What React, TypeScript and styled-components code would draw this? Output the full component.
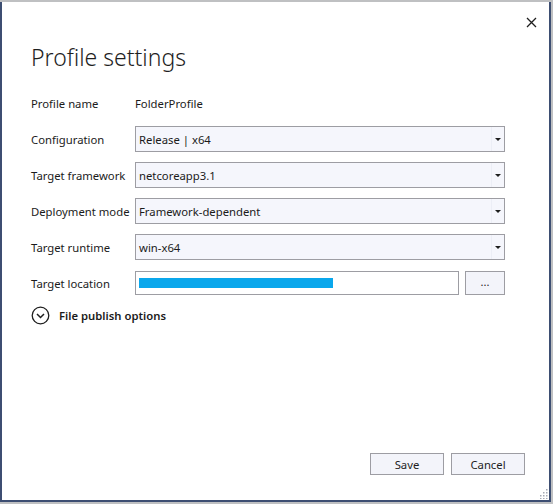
import React from 'react';
import styled, { createGlobalStyle } from 'styled-components';

const GlobalStyle = createGlobalStyle`
  html, body {
    margin: 0;
    padding: 0;
    background: #bfc0c2;
  }
  body {
    font-family: 'Noto Sans', 'Open Sans', sans-serif;
    font-size: 11.3px;
    color: #1b1b1b;
  }
`;

const Screen = styled.div`
  width: 553px;
  height: 504px;
  padding-top: 2px;
  box-sizing: border-box;
`;

const Window = styled.div`
  position: relative;
  width: 551px;
  height: 500px;
  box-sizing: border-box;
  background: #ffffff;
  border-left: 2px solid #3d4e72;
  border-right: 2px solid #3d4e72;
  border-bottom: 2px solid #3d4e72;
  display: flex;
  flex-direction: column;
  padding: 0 44px 25px 29px;
`;

const TopBar = styled.div`
  display: flex;
  justify-content: flex-end;
  height: 39px;
  margin-right: -35px;
  padding-top: 11px;
  box-sizing: border-box;
`;

const CloseButton = styled.button`
  width: 18px;
  height: 18px;
  border: none;
  background: transparent;
  padding: 0;
  display: flex;
  align-items: center;
  justify-content: center;
  cursor: pointer;
`;

const Title = styled.h1`
  margin: 0;
  font-family: 'Noto Sans', 'Open Sans', sans-serif;
  font-weight: 300;
  font-size: 23px;
  line-height: 32px;
  color: #1e1e1e;
`;

const Form = styled.div`
  margin-top: 17px;
  display: grid;
  grid-template-columns: 104px 1fr;
  grid-auto-rows: 26px;
  row-gap: 10px;
  align-items: center;
`;

const Label = styled.div`
  white-space: nowrap;
`;

const Value = styled.div``;

const Select = styled.div`
  height: 26px;
  box-sizing: border-box;
  border: 1px solid #9d9da3;
  background: #f5f6fc;
  display: flex;
  align-items: center;
`;

const SelectText = styled.span`
  flex: 1;
  padding-left: 3px;
  white-space: nowrap;
`;

const SelectArrow = styled.span`
  width: 12px;
  height: 100%;
  border-left: 1px solid #eceef6;
  display: flex;
  align-items: center;
  justify-content: center;
  &::after {
    content: '';
    border-left: 3px solid transparent;
    border-right: 3px solid transparent;
    border-top: 3px solid #1e1e1e;
  }
`;

const LocationRow = styled.div`
  display: flex;
  gap: 6px;
  height: 24px;
`;

const PathInput = styled.div`
  flex: 1;
  box-sizing: border-box;
  border: 1px solid #9d9da3;
  background: #ffffff;
  padding: 6px 0 0 3px;
`;

const Redaction = styled.div`
  width: 194px;
  height: 10px;
  background: #0aa7ec;
`;

const Browse = styled.button`
  width: 40px;
  height: 24px;
  box-sizing: border-box;
  border: 1px solid #9d9da3;
  background: #f3f4fa;
  font-family: inherit;
  font-size: 11px;
  color: #1e1e1e;
  padding: 0 0 4px;
`;

const Expander = styled.div`
  margin-top: 9px;
  display: flex;
  align-items: center;
  gap: 9px;
  font-weight: 600;
  height: 20px;
`;

const Spacer = styled.div`
  flex: 1;
`;

const Footer = styled.div`
  display: flex;
  justify-content: flex-end;
  gap: 7px;
  margin-right: -20px;
`;

const Button = styled.button`
  width: 74px;
  height: 22px;
  box-sizing: border-box;
  border: 1px solid #9d9da3;
  background: #f3f4fa;
  font-family: inherit;
  font-size: 11.3px;
  color: #1e1e1e;
  padding: 0;
`;

const Grip = styled.svg`
  position: absolute;
  right: 1px;
  bottom: 1px;
`;

const fields = [
  { label: 'Configuration', value: 'Release | x64' },
  { label: 'Target framework', value: 'netcoreapp3.1' },
  { label: 'Deployment mode', value: 'Framework-dependent' },
  { label: 'Target runtime', value: 'win-x64' },
];

export default function App() {
  return (
    <Screen>
      <GlobalStyle />
      <Window>
        <TopBar>
          <CloseButton aria-label="Close">
            <svg width="11" height="11" viewBox="0 0 11 11">
              <path d="M1 1 L10 10 M10 1 L1 10" stroke="#1e1e1e" strokeWidth="1.3" />
            </svg>
          </CloseButton>
        </TopBar>
        <Title>Profile settings</Title>
        <Form>
          <Label>Profile name</Label>
          <Value>FolderProfile</Value>
          {fields.map((f) => (
            <React.Fragment key={f.label}>
              <Label>{f.label}</Label>
              <Select>
                <SelectText>{f.value}</SelectText>
                <SelectArrow />
              </Select>
            </React.Fragment>
          ))}
          <Label>Target location</Label>
          <LocationRow>
            <PathInput>
              <Redaction />
            </PathInput>
            <Browse>...</Browse>
          </LocationRow>
        </Form>
        <Expander>
          <svg width="19" height="19" viewBox="0 0 19 19">
            <circle cx="9.5" cy="9.5" r="8.3" fill="none" stroke="#1e1e1e" strokeWidth="1.3" />
            <path d="M6 8 L9.5 11.5 L13 8" fill="none" stroke="#1e1e1e" strokeWidth="1.5" />
          </svg>
          File publish options
        </Expander>
        <Spacer />
        <Footer>
          <Button>Save</Button>
          <Button>Cancel</Button>
        </Footer>
        <Grip width="10" height="10" viewBox="0 0 10 10">
          {[
            [8, 0], [8, 3], [5, 3], [8, 6], [5, 6], [2, 6], [8, 9], [5, 9], [2, 9],
          ].map(([x, y]) => (
            <rect key={`${x}-${y}`} x={x} y={y} width="1.5" height="1.5" fill="#a5a9b4" />
          ))}
        </Grip>
      </Window>
    </Screen>
  );
}
